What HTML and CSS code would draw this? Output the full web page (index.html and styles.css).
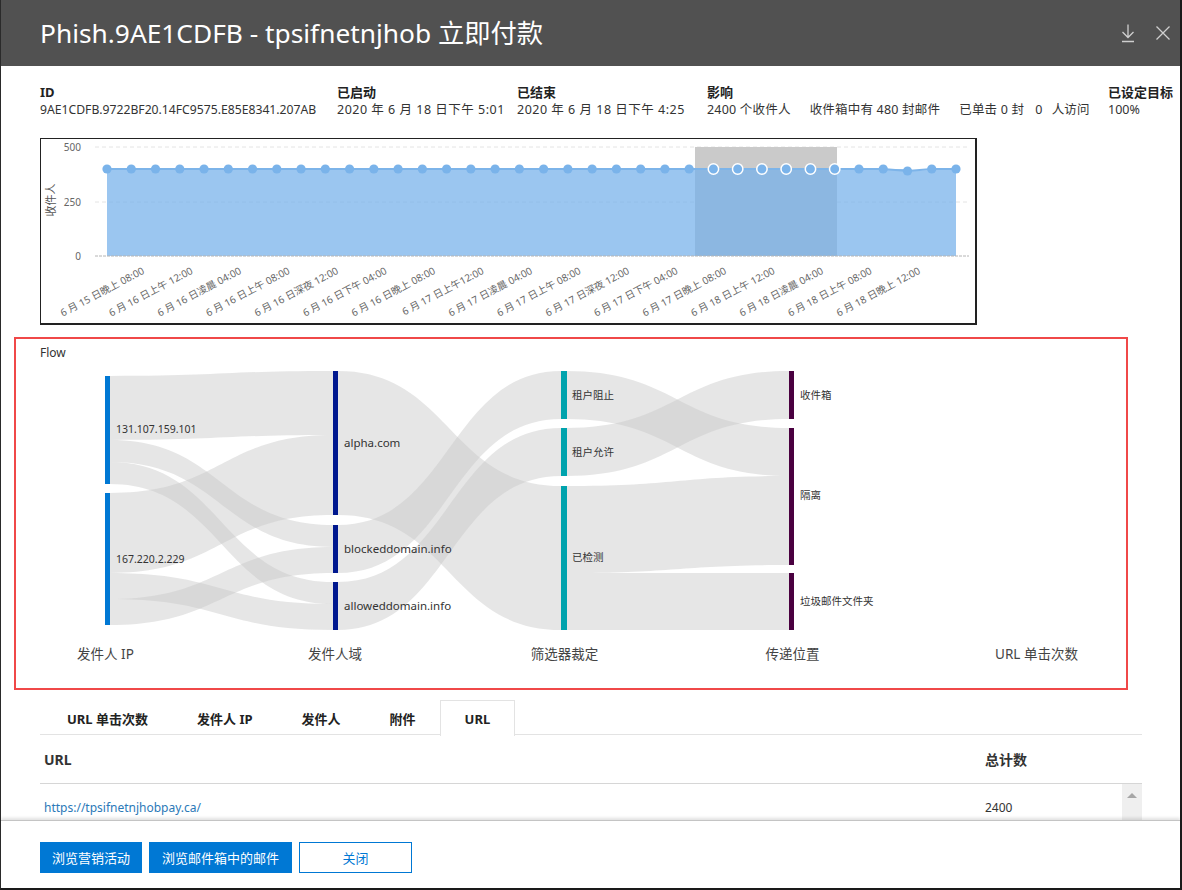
FILE: index.html
```html
<!DOCTYPE html>
<html lang="zh-CN">
<head>
<meta charset="utf-8">
<title>Phish.9AE1CDFB - tpsifnetnjhob 立即付款</title>
<link rel="stylesheet" href="styles.css">
</head>
<body>
<div class="window">
  <header class="titlebar">
    <h1 class="title">Phish.9AE1CDFB - tpsifnetnjhob 立即付款</h1>
    <div class="title-actions">
      <svg class="icon" width="16" height="20" viewBox="0 0 16 20"><path d="M8 1.5V14.5M2.5 9L8 14.5L13.5 9M2 18.5H14" fill="none" stroke="#cfcfcf" stroke-width="1.3"/></svg>
      <svg class="icon" width="16" height="16" viewBox="0 0 16 16"><path d="M1.5 1.5L14.5 14.5M14.5 1.5L1.5 14.5" fill="none" stroke="#cfcfcf" stroke-width="1.3"/></svg>
    </div>
  </header>

  <main class="content">
    <section class="summary">
      <div class="field"><div class="label">ID</div><div class="value id">9AE1CDFB.9722BF20.14FC9575.E85E8341.207AB</div></div>
      <div class="field"><div class="label">已启动</div><div class="value spaced">2020 年 6 月 18 日下午 5:01</div></div>
      <div class="field"><div class="label">已结束</div><div class="value spaced">2020 年 6 月 18 日下午 4:25</div></div>
      <div class="field"><div class="label">影响</div><div class="value impact"><span class="gap-l">2400 个收件人</span><span class="gap-l">收件箱中有 480 封邮件</span><span class="gap-m">已单击 0 封</span><span class="gap-s">0</span><span>人访问</span></div></div>
      <div class="field"><div class="label">已设定目标</div><div class="value">100%</div></div>
    </section>

    <div class="chart-card">
      <svg class="chart" width="935" height="185" viewBox="0 0 935 185">
        <line x1="54" y1="8" x2="927" y2="8" stroke="#e4e4e4" stroke-dasharray="4 3"/>
        <line x1="54" y1="63" x2="927" y2="63" stroke="#e4e4e4" stroke-dasharray="4 3"/>
        <rect x="654" y="8" width="142" height="109" fill="#cacaca"/>
        <polygon points="66,117 66,30 866.49,30 866.49,32 915,30 915,117" fill="rgb(117,176,234)" fill-opacity="0.72"/>
        <polyline points="66,30 842.23,30 866.49,32 890.74,30 915,30" fill="none" stroke="#7db4e9" stroke-width="2"/>
        <line x1="54" y1="117" x2="928" y2="117" stroke="#b4b4b4" stroke-dasharray="3 1"/>
        <g fill="#7ab3ea">
          <circle cx="66" cy="30" r="4.6"/><circle cx="90.26" cy="30" r="4.6"/><circle cx="114.51" cy="30" r="4.6"/><circle cx="138.77" cy="30" r="4.6"/>
          <circle cx="163.03" cy="30" r="4.6"/><circle cx="187.29" cy="30" r="4.6"/><circle cx="211.54" cy="30" r="4.6"/><circle cx="235.8" cy="30" r="4.6"/>
          <circle cx="260.06" cy="30" r="4.6"/><circle cx="284.31" cy="30" r="4.6"/><circle cx="308.57" cy="30" r="4.6"/><circle cx="332.83" cy="30" r="4.6"/>
          <circle cx="357.08" cy="30" r="4.6"/><circle cx="381.34" cy="30" r="4.6"/><circle cx="405.6" cy="30" r="4.6"/><circle cx="429.86" cy="30" r="4.6"/>
          <circle cx="454.11" cy="30" r="4.6"/><circle cx="478.37" cy="30" r="4.6"/><circle cx="502.63" cy="30" r="4.6"/><circle cx="526.88" cy="30" r="4.6"/>
          <circle cx="551.14" cy="30" r="4.6"/><circle cx="575.4" cy="30" r="4.6"/><circle cx="599.66" cy="30" r="4.6"/><circle cx="623.91" cy="30" r="4.6"/>
          <circle cx="648.17" cy="30" r="4.6"/>
          <circle cx="817.97" cy="30" r="4.6"/><circle cx="842.23" cy="30" r="4.6"/><circle cx="866.49" cy="32" r="4.6"/><circle cx="890.74" cy="30" r="4.6"/><circle cx="915" cy="30" r="4.6"/>
        </g>
        <g fill="#7ab3ea" stroke="#ffffff" stroke-width="1.5">
          <circle cx="672.43" cy="30" r="5.2"/><circle cx="696.69" cy="30" r="5.2"/><circle cx="720.94" cy="30" r="5.2"/>
          <circle cx="745.2" cy="30" r="5.2"/><circle cx="769.46" cy="30" r="5.2"/><circle cx="793.71" cy="30" r="5.2"/>
        </g>
        <g class="axis-text" text-anchor="end">
          <text x="40" y="11.5">500</text>
          <text x="40" y="66.5">250</text>
          <text x="40" y="120.5">0</text>
        </g>
        <text class="axis-title" x="9" y="61" text-anchor="middle" transform="rotate(-90 9 61)" dominant-baseline="central">收件人</text>
        <g class="axis-text" text-anchor="end">
          <text x="104" y="134" transform="rotate(-28 104 134)">6 月 15 日晚上 08:00</text>
          <text x="152.5" y="134" transform="rotate(-28 152.5 134)">6 月 16 日上午 12:00</text>
          <text x="201" y="134" transform="rotate(-28 201 134)">6 月 16 日凌晨 04:00</text>
          <text x="249.5" y="134" transform="rotate(-28 249.5 134)">6 月 16 日上午 08:00</text>
          <text x="298" y="134" transform="rotate(-28 298 134)">6 月 16 日深夜 12:00</text>
          <text x="346.5" y="134" transform="rotate(-28 346.5 134)">6 月 16 日下午 04:00</text>
          <text x="395" y="134" transform="rotate(-28 395 134)">6 月 16 日晚上 08:00</text>
          <text x="443.5" y="134" transform="rotate(-28 443.5 134)">6 月 17 日上午12:00</text>
          <text x="492" y="134" transform="rotate(-28 492 134)">6 月 17 日凌晨 04:00</text>
          <text x="540.5" y="134" transform="rotate(-28 540.5 134)">6 月 17 日上午 08:00</text>
          <text x="589" y="134" transform="rotate(-28 589 134)">6 月 17 日深夜 12:00</text>
          <text x="637.5" y="134" transform="rotate(-28 637.5 134)">6 月 17 日下午 04:00</text>
          <text x="686" y="134" transform="rotate(-28 686 134)">6 月 17 日晚上 08:00</text>
          <text x="734.5" y="134" transform="rotate(-28 734.5 134)">6 月 18 日上午 12:00</text>
          <text x="783" y="134" transform="rotate(-28 783 134)">6 月 18 日凌晨  04:00</text>
          <text x="831.5" y="134" transform="rotate(-28 831.5 134)">6 月 18 日上午 08:00</text>
          <text x="880" y="134" transform="rotate(-28 880 134)">6 月 18 日晚上 12:00</text>
        </g>
      </svg>
    </div>

    <section class="flow">
      <div class="flow-title">Flow</div>
      <svg class="sankey" width="1110" height="310" viewBox="0 0 1110 310">
        <g class="links" fill="rgb(200,200,200)" fill-opacity="0.45">
          <path d="M94 15C205.5 15 205.5 10 317 10L317 74C205.5 74 205.5 79 94 79Z"/>
          <path d="M94 79C205.5 79 205.5 164 317 164L317 186C205.5 186 205.5 101 94 101Z"/>
          <path d="M94 101C205.5 101 205.5 221 317 221L317 243C205.5 243 205.5 123 94 123Z"/>
          <path d="M94 132C205.5 132 205.5 74 317 74L317 154C205.5 154 205.5 212 94 212Z"/>
          <path d="M94 212C205.5 212 205.5 243 317 243L317 269C205.5 269 205.5 238 94 238Z"/>
          <path d="M94 238C205.5 238 205.5 186 317 186L317 212C205.5 212 205.5 264 94 264Z"/>
          <path d="M322 10C433.5 10 433.5 125 545 125L545 269C433.5 269 433.5 154 322 154Z"/>
          <path d="M322 164C433.5 164 433.5 10 545 10L545 58C433.5 58 433.5 212 322 212Z"/>
          <path d="M322 221C433.5 221 433.5 67 545 67L545 115C433.5 115 433.5 269 322 269Z"/>
          <path d="M550 10C661.5 10 661.5 67 773 67L773 115C661.5 115 661.5 58 550 58Z"/>
          <path d="M550 67C661.5 67 661.5 10 773 10L773 58C661.5 58 661.5 115 550 115Z"/>
          <path d="M550 125C661.5 125 661.5 115 773 115L773 204C661.5 204 661.5 212 550 212Z"/>
          <path d="M550 212L773 212L773 269L550 269Z"/>
        </g>
        <g fill="#0078d4">
          <rect x="89" y="15" width="5" height="108"/>
          <rect x="89" y="132" width="5" height="132"/>
        </g>
        <g fill="#00188f">
          <rect x="317" y="10" width="5" height="144"/>
          <rect x="317" y="164" width="5" height="48"/>
          <rect x="317" y="221" width="5" height="48"/>
        </g>
        <g fill="#00a3ad">
          <rect x="545" y="10" width="6" height="48"/>
          <rect x="545" y="67" width="6" height="48"/>
          <rect x="545" y="125" width="6" height="144"/>
        </g>
        <g fill="#4a0040">
          <rect x="773" y="10" width="5" height="48"/>
          <rect x="773" y="67" width="5" height="137"/>
          <rect x="773" y="212" width="5" height="57"/>
        </g>
        <g class="node-label" dominant-baseline="central">
          <text x="100" y="68">131.107.159.101</text>
          <text x="100" y="198">167.220.2.229</text>
          <text class="lg" x="328" y="81">alpha.com</text>
          <text class="lg" x="328" y="187">blockeddomain.info</text>
          <text class="lg" x="328" y="244">alloweddomain.info</text>
          <text x="556" y="34">租户阻止</text>
          <text x="556" y="91">租户允许</text>
          <text x="556" y="196">已检测</text>
          <text x="784" y="34">收件箱</text>
          <text x="784" y="134">隔离</text>
          <text x="784" y="240">垃圾邮件文件夹</text>
        </g>
        <g class="col-label" text-anchor="middle" dominant-baseline="central">
          <text x="89.5" y="293">发件人 IP</text>
          <text x="319" y="293">发件人域</text>
          <text x="548.5" y="293">筛选器裁定</text>
          <text x="776.5" y="293">传递位置</text>
          <text x="1020.5" y="293">URL 单击次数</text>
        </g>
      </svg>
    </section>

    <nav class="tabs">
      <div class="tab">URL 单击次数</div>
      <div class="tab">发件人 IP</div>
      <div class="tab">发件人</div>
      <div class="tab">附件</div>
      <div class="tab active">URL</div>
    </nav>

    <div class="grid">
      <div class="grid-head">
        <div class="col-url">URL</div>
        <div class="col-count">总计数</div>
      </div>
      <div class="grid-body">
        <div class="grid-row">
          <div class="col-url"><a class="link" href="#">https://tpsifnetnjhobpay.ca/</a></div>
          <div class="col-count">2400</div>
        </div>
        <div class="scrollbar"><span class="arrow-up"></span></div>
      </div>
    </div>
  </main>

  <footer class="footer">
    <button class="btn primary w1">浏览营销活动</button>
    <button class="btn primary w2">浏览邮件箱中的邮件</button>
    <button class="btn secondary w3">关闭</button>
  </footer>
</div>
</body>
</html>
```

FILE: styles.css
```css
* { box-sizing: border-box; }

html, body {
  margin: 0;
  padding: 0;
  background: #ffffff;
}

body {
  font-family: "Noto Sans", "Noto Sans CJK SC", sans-serif;
  color: #333333;
}

.window {
  width: 1182px;
  height: 890px;
  display: flex;
  flex-direction: column;
  border-left: 1px solid #2a2a2a;
  border-right: 2px solid #1a1a1a;
  border-bottom: 2px solid #1a1a1a;
  overflow: hidden;
}

/* Title bar */
.titlebar {
  flex: none;
  height: 66px;
  background: #515151;
  display: flex;
  align-items: center;
  justify-content: space-between;
  padding: 0 9px 0 39px;
}

.title {
  margin: 0;
  font-family: "Noto Sans", "Noto Sans CJK SC", sans-serif;
  font-size: 26.3px;
  font-weight: 400;
  line-height: 1;
  color: #ffffff;
}

.title-actions {
  display: flex;
  align-items: center;
  gap: 19px;
}

.icon { display: block; }

/* Main content */
.content {
  flex: 1;
  min-height: 0;
  overflow: hidden;
  padding: 0 38px 0 39px;
}

.summary {
  display: grid;
  grid-template-columns: 297px 180px 190px 401px 34px;
  padding-top: 17px;
}

.label {
  font-size: 13px;
  font-weight: 700;
  line-height: 18px;
  color: #222222;
  white-space: nowrap;
}

.value {
  font-size: 12.5px;
  line-height: 18px;
  color: #333333;
  white-space: nowrap;
}

.value.id { font-size: 12.2px; }
.value.spaced { letter-spacing: 0.5px; }

.impact { display: flex; letter-spacing: 0.2px; }
.gap-l { margin-right: 19px; }
.gap-m { margin-right: 11px; }
.gap-s { margin-right: 9px; }

/* Chart */
.chart-card {
  margin-top: 19px;
  width: 937px;
  height: 187px;
  border: 1px solid #222222;
  border-right-width: 2px;
  border-bottom-width: 2px;
}

.chart { display: block; }

.axis-text {
  font-size: 10px;
  fill: #666666;
}

.axis-title {
  font-size: 11px;
  fill: #555555;
}

/* Flow (sankey) */
.flow {
  margin-top: 12px;
  margin-left: -26px;
  width: 1114px;
  height: 353px;
  border: 2px solid #f04848;
  padding: 6px 0 0 0;
}

.flow-title {
  padding-left: 24px;
  font-size: 12px;
  line-height: 16px;
  color: #333333;
}

.sankey { display: block; }

.node-label {
  font-size: 10.5px;
  fill: #333333;
}

.node-label .lg { font-size: 11.5px; }

.col-label {
  font-size: 13.5px;
  fill: #444444;
}

/* Tabs */
.tabs {
  margin-top: 10px;
  display: flex;
  height: 35px;
  border-bottom: 1px solid #e3e3e3;
}

.tab {
  height: 35px;
  padding: 0 23.5px;
  display: flex;
  align-items: center;
  font-size: 13px;
  font-weight: 700;
  color: #222222;
  border: 1px solid transparent;
  border-bottom: none;
}

.tab:first-child { padding-left: 26px; }

.tab.active {
  border-color: #e3e3e3;
  background: #ffffff;
  margin-bottom: -1px;
  height: 36px;
}

/* Grid */
.grid-head {
  display: flex;
  align-items: center;
  height: 49px;
  border-bottom: 1px solid #d6d6d6;
  font-size: 14px;
  font-weight: 700;
  color: #333333;
}

.col-url {
  flex: 1;
  padding-left: 4px;
}

.col-count { width: 157px; }

.grid-body {
  display: flex;
  height: 37px;
  overflow: hidden;
}

.grid-row {
  flex: 1;
  display: flex;
  padding-top: 15px;
  font-size: 12px;
  line-height: 18px;
  color: #333333;
}

.grid-row .col-count { width: 137px; }

.link {
  color: #2b79b8;
  text-decoration: none;
}

.scrollbar {
  width: 20px;
  background: #efefef;
  display: flex;
  justify-content: center;
  padding-top: 9px;
}

.arrow-up {
  width: 0;
  height: 0;
  border-left: 5px solid transparent;
  border-right: 5px solid transparent;
  border-bottom: 5px solid #a6a6a6;
}

/* Footer */
.footer {
  flex: none;
  height: 68px;
  position: relative;
  background: #ffffff;
  border-top: 1px solid #c4c4c4;
  box-shadow: 0 -2px 3px rgba(0, 0, 0, 0.12);
  display: flex;
  align-items: flex-start;
  gap: 7px;
  padding: 21px 0 0 39px;
}

.btn {
  height: 31px;
  font-family: "Noto Sans CJK SC", "Noto Sans", sans-serif;
  font-size: 13px;
  padding: 0;
  cursor: pointer;
}

.btn.primary {
  background: #0078d4;
  border: none;
  color: #ffffff;
}

.btn.secondary {
  background: #ffffff;
  border: 1px solid #0078d4;
  color: #0078d4;
}

.w1 { width: 102px; }
.w2 { width: 143px; }
.w3 { width: 113px; }
```
